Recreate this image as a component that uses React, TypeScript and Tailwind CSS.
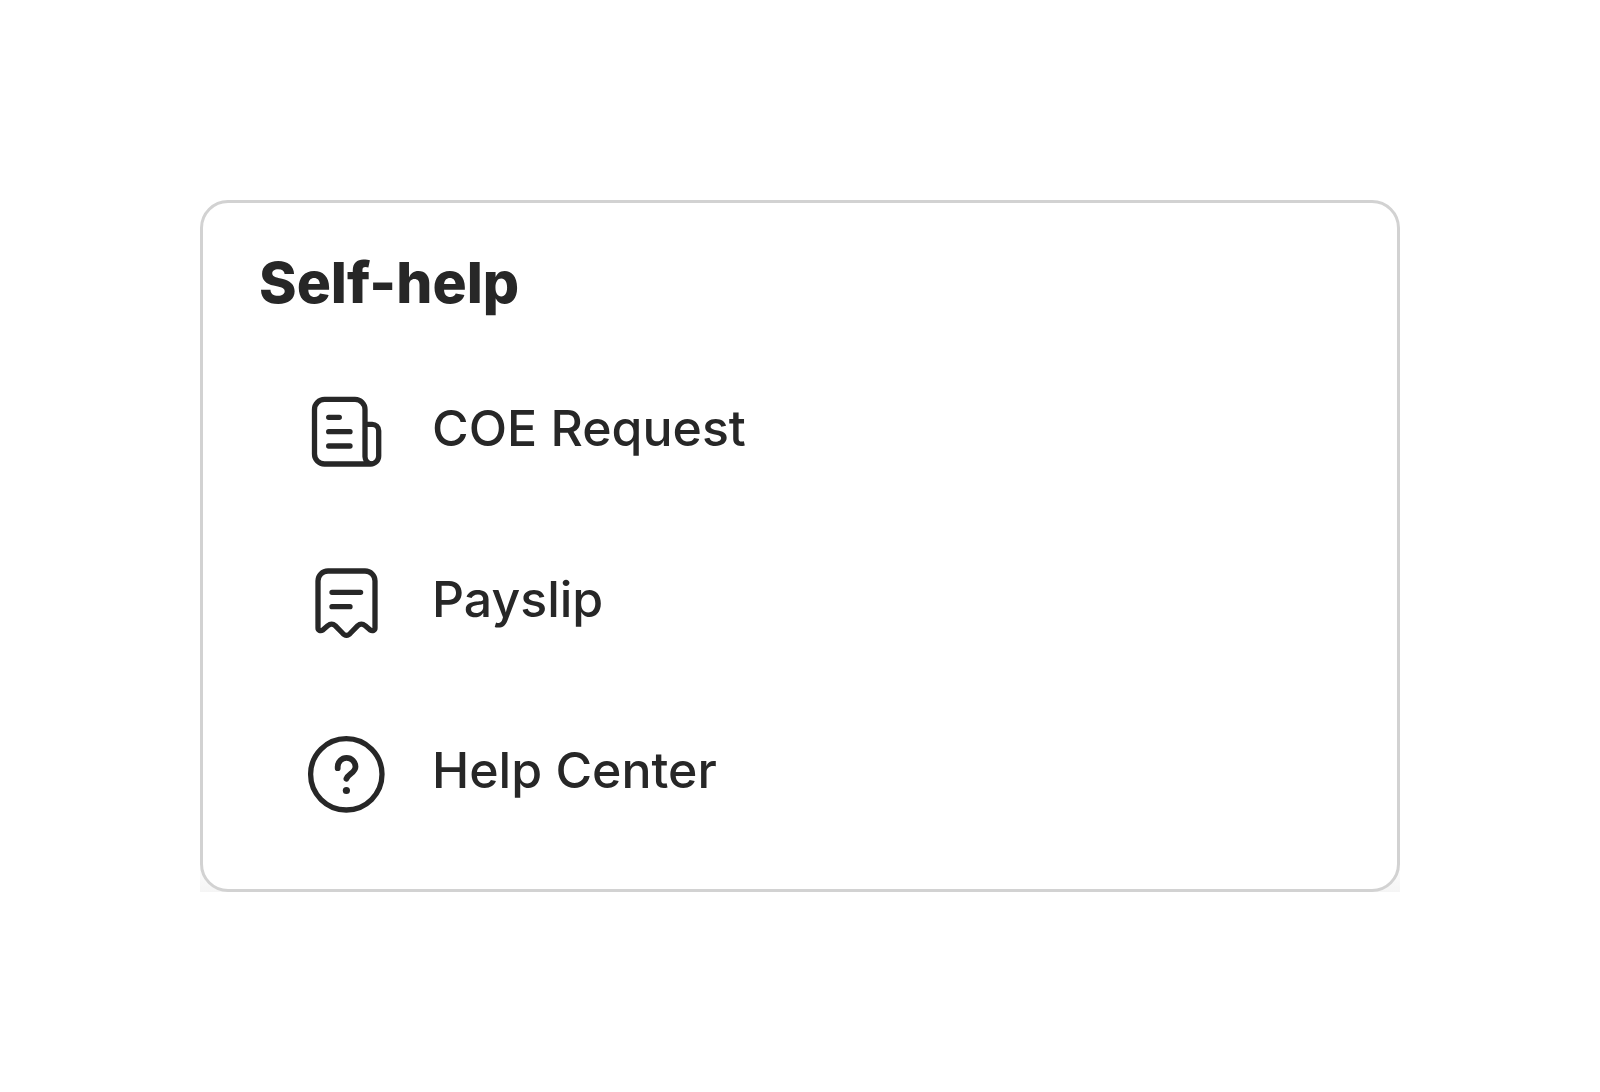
import React from 'react';

const iconProps = {
  viewBox: '0 0 84 84',
  fill: 'none',
  stroke: 'currentColor',
  strokeWidth: 5.3,
  strokeLinecap: 'round' as const,
  strokeLinejoin: 'round' as const,
  className: 'size-[84px] shrink-0',
  'aria-hidden': true,
};

function DocumentIcon() {
  return (
    <svg {...iconProps}>
      <path d="M61 34.3H68.2a6.5 6.5 0 0 1 6.5 6.5V66a8 8 0 0 1-8 8H20.5a10 10 0 0 1-10-10V19.4a10 10 0 0 1 10-10h30.5a10 10 0 0 1 10 10V66.8a7 7 0 0 0 7 7" />
      <path d="M24.7 27.3h10.6M24.7 41.7H46M24.7 56H46" />
    </svg>
  );
}

function ReceiptIcon() {
  return (
    <svg {...iconProps}>
      <path d="M14 67V20a10 10 0 0 1 10-10h37a10 10 0 0 1 10 10v47c0 2.4-2.6 3.4-4.8 2l-5.2-4.4c-2.2-2-5-2-7.2 0l-7.2 7.4c-2.4 3.2-5.8 3.2-8.2 0l-7.2-7.4c-2.2-2-5-2-7.2 0L18.8 69c-2.2 1.4-4.8.4-4.8-2z" />
      <path d="M28 31.3h28.6M28 45.7H46" />
    </svg>
  );
}

function HelpIcon() {
  return (
    <svg {...iconProps}>
      <circle cx="42.3" cy="42.3" r="35.7" />
      <path d="M33.7 36.2v-1.4a8.9 8.9 0 0 1 17.8 0c0 5.8-7.4 7.2-9.1 11.9" strokeWidth={5.8} />
      <circle cx="42.4" cy="58.5" r="3.6" fill="currentColor" stroke="none" />
    </svg>
  );
}

const links = [
  { label: 'COE Request', Icon: DocumentIcon },
  { label: 'Payslip', Icon: ReceiptIcon },
  { label: 'Help Center', Icon: HelpIcon },
];

export default function App() {
  return (
    <main className="min-h-screen bg-white p-[200px] font-['Inter',sans-serif] text-[#272727]">
      {/* faint tint that shows only behind the lower corners */}
      <div className="bg-linear-to-b from-white from-95% to-[#f5f5f5]">
        <section className="rounded-[28px] border-3 border-[#d2d2d2] bg-white px-14 pt-12 pb-[73px]">
          <h2 className="text-[57px] leading-[64px] font-extrabold">Self-help</h2>
          <ul className="mt-[75px] flex flex-col gap-[87px] pl-[45px]">
            {links.map(({ label, Icon }) => (
              <li key={label}>
                <a href="#" className="flex items-center gap-11">
                  <Icon />
                  <span className="pb-2 text-[50px] leading-[60px] font-medium">{label}</span>
                </a>
              </li>
            ))}
          </ul>
        </section>
      </div>
    </main>
  );
}
